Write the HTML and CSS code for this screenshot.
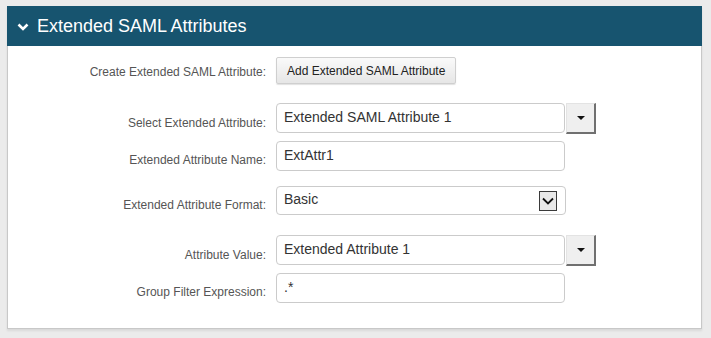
FILE: index.html
```html
<!DOCTYPE html>
<html lang="en">

<head>
    <meta charset="UTF-8">
    <title>Extended SAML Attributes</title>
    <link rel="stylesheet" href="styles.css">
</head>

<body>
    <div class="panel">
        <div class="panel-header">
            <svg class="chevron" width="12" height="8" viewBox="0 0 12 8">
                <path d="M1.5 1.5 L6 6 L10.5 1.5" fill="none" stroke="#fff" stroke-width="2.6" />
            </svg>
            <div class="panel-title">Extended SAML Attributes</div>
        </div>

        <div class="panel-body">
            <div class="form-row row-button">
                <div class="form-label">Create Extended SAML Attribute:</div>
                <button class="btn">Add Extended SAML Attribute</button>
            </div>

            <div class="form-row row-combo">
                <div class="form-label">Select Extended Attribute:</div>
                <div class="combo">
                    <div class="field">Extended SAML Attribute 1</div>
                    <div class="combo-btn"><span class="caret"></span></div>
                </div>
            </div>

            <div class="form-row row-tight">
                <div class="form-label">Extended Attribute Name:</div>
                <div class="field">ExtAttr1</div>
            </div>

            <div class="form-row row-format">
                <div class="form-label">Extended Attribute Format:</div>
                <div class="field select-field">
                    <span>Basic</span>
                    <span class="select-arrow">
                        <svg width="12" height="8" viewBox="0 0 12 8">
                            <path d="M1 1.5 L6 6.5 L11 1.5" fill="none" stroke="#111" stroke-width="1.8" />
                        </svg>
                    </span>
                </div>
            </div>

            <div class="form-row row-value">
                <div class="form-label">Attribute Value:</div>
                <div class="combo">
                    <div class="field">Extended Attribute 1</div>
                    <div class="combo-btn"><span class="caret"></span></div>
                </div>
            </div>

            <div class="form-row row-tight">
                <div class="form-label">Group Filter Expression:</div>
                <div class="field">.*</div>
            </div>
        </div>
    </div>
</body>

</html>
```

FILE: styles.css
```css
body {
    margin: 0;
    padding: 6px 9px 9px 7px;
    background: #ebebeb;
    font-family: 'Liberation Sans', Arial, sans-serif;
}

.panel {
    background: white;
    border: 1px solid #c8c8c8;
    border-top: none;
    box-shadow: 0 2px 2px rgba(0, 0, 0, 0.08);
}

.panel-header {
    height: 40px;
    margin: 0 -1px;
    background: #17546f;
    display: flex;
    align-items: center;
    padding-left: 10px;
}

.chevron {
    margin-right: 8px;
    margin-top: 1px;
}

.panel-title {
    color: white;
    font-size: 18px;
}

.panel-body {
    padding: 11px 0 25px 0;
}

.form-row {
    display: flex;
    align-items: center;
}

.form-label {
    width: 258px;
    margin-right: 10px;
    text-align: right;
    font-size: 12px;
    color: #555;
    margin-top: 8px;
}

.row-button .form-label {
    margin-top: 3px;
}

.row-combo {
    margin-top: 19px;
}

.row-tight {
    margin-top: 7px;
}

.row-format {
    margin-top: 15px;
}

.row-value {
    margin-top: 20px;
}

.btn {
    height: 27px;
    padding: 0 10px;
    font-family: 'Liberation Sans', Arial, sans-serif;
    font-size: 12px;
    color: #222;
    background: linear-gradient(#fafafa, #e6e6e6);
    border: 1px solid #cfcfcf;
    border-radius: 2px;
    box-shadow: 0 1px 1px rgba(0, 0, 0, 0.12);
}

.combo {
    display: flex;
}

.field {
    box-sizing: border-box;
    width: 289px;
    height: 30px;
    padding: 0 7px;
    border: 1px solid #cbcbcb;
    border-radius: 4px;
    background: white;
    font-size: 14px;
    color: #333;
    display: flex;
    align-items: center;
    padding-bottom: 3px;
}

.combo-btn {
    box-sizing: border-box;
    width: 30px;
    height: 31px;
    margin-left: 1px;
    background: #efefef;
    border: 1px solid #e3e3e3;
    border-right: 2px solid #707070;
    border-bottom: 2px solid #707070;
    display: flex;
    align-items: center;
    justify-content: center;
}

.caret {
    width: 0;
    height: 0;
    border-left: 4px solid transparent;
    border-right: 4px solid transparent;
    border-top: 4px solid #111;
}

.select-field {
    width: 290px;
    height: 29px;
    justify-content: space-between;
    padding-right: 8px;
    padding-bottom: 0;
}

.select-field span:first-child {
    padding-bottom: 3px;
}

.select-arrow {
    box-sizing: border-box;
    width: 18px;
    height: 20px;
    background: #e9e9e9;
    border: 1px solid #3a3a3a;
    display: flex;
    align-items: center;
    justify-content: center;
}
```
